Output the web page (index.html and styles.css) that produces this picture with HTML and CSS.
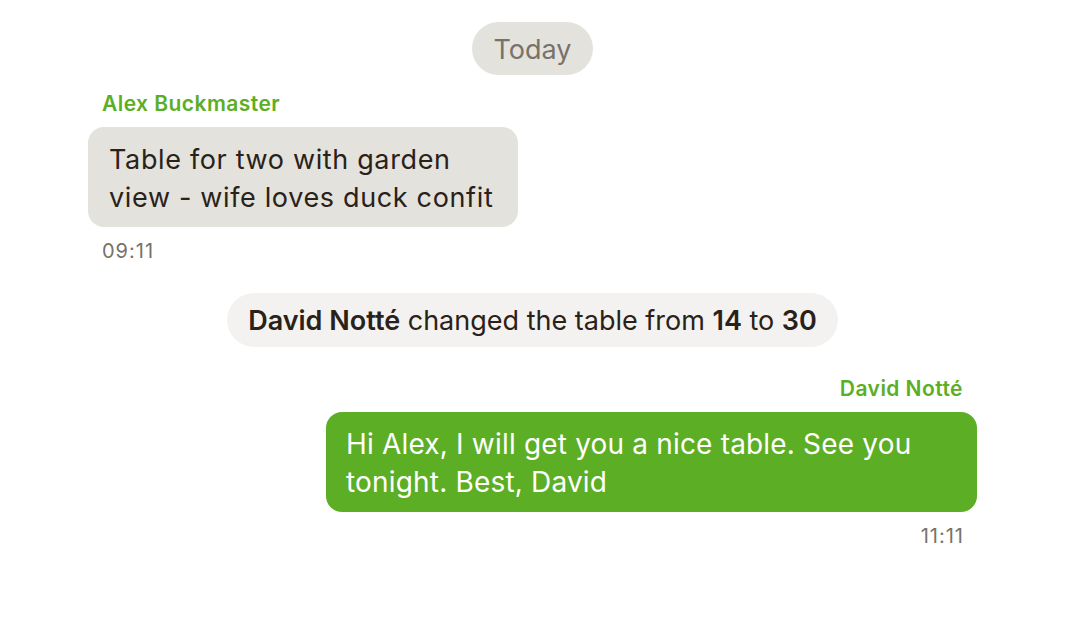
FILE: index.html
```html
<!DOCTYPE html>
<html>
<head>
<meta charset="utf-8">
<link rel="stylesheet" href="styles.css">
</head>
<body>
<main class="chat">
  <div class="day">Today</div>

  <div class="msg msg-in">
    <div class="author">Alex Buckmaster</div>
    <div class="bubble bubble-in">Table for two with garden view - wife loves duck confit</div>
    <div class="time">09:11</div>
  </div>

  <div class="system"><b>David Notté</b> changed the table from <b>14</b> to <b>30</b></div>

  <div class="msg msg-out">
    <div class="author">David Notté</div>
    <div class="bubble bubble-out">Hi Alex, I will get you a nice table. See you tonight. Best, David</div>
    <div class="time">11:11</div>
  </div>
</main>
</body>
</html>
```

FILE: styles.css
```css
* { box-sizing: border-box; }
html, body { margin: 0; background: #ffffff; }
body {
  font-family: Inter, "Noto Sans", sans-serif;
  color: #2a2118;
}
.chat {
  width: 1066px;
  padding: 22px 89px 0 88px;
  display: flex;
  flex-direction: column;
}
.day {
  align-self: center;
  height: 53px;
  padding: 2px 22px 0;
  border-radius: 27px;
  background: #e3e2dc;
  color: #77726a;
  font-size: 27px;
  line-height: 51px;
}
.msg {
  display: flex;
  flex-direction: column;
}
.msg-in { align-items: flex-start; margin-top: 16px; }
.msg-out { align-items: flex-end; margin-top: 29px; }
.author {
  font-size: 21px;
  line-height: 24px;
  padding: 1px 14px 0;
  font-weight: 600;
  color: #5cae24;
  letter-spacing: 0.45px;
}
.bubble {
  margin-top: 11px;
  border-radius: 16px;
  line-height: 38px;
}
.bubble-in {
  background: #e3e2dc;
  color: #2a2118;
  width: 430px;
  padding: 14px 18px 10px 21px;
  font-size: 27px;
  letter-spacing: 0.65px;
}
.bubble-out {
  background: #5cae24;
  color: #ffffff;
  width: 651px;
  padding: 13px 18px 11px 20px;
  font-size: 28px;
  letter-spacing: 0.18px;
}
.time {
  margin-top: 13px;
  padding: 0 14px;
  font-size: 20px;
  line-height: 22px;
  color: #77726a;
  letter-spacing: 1px;
}
.msg-out .time { padding-right: 13px; }
.system {
  align-self: center;
  margin-top: 31px;
  height: 54px;
  padding: 1px 21px 0;
  border-radius: 27px;
  background: #f3f2f0;
  font-size: 27px;
  line-height: 53px;
  color: #2a2118;
}
.system b { font-weight: 600; }
```
